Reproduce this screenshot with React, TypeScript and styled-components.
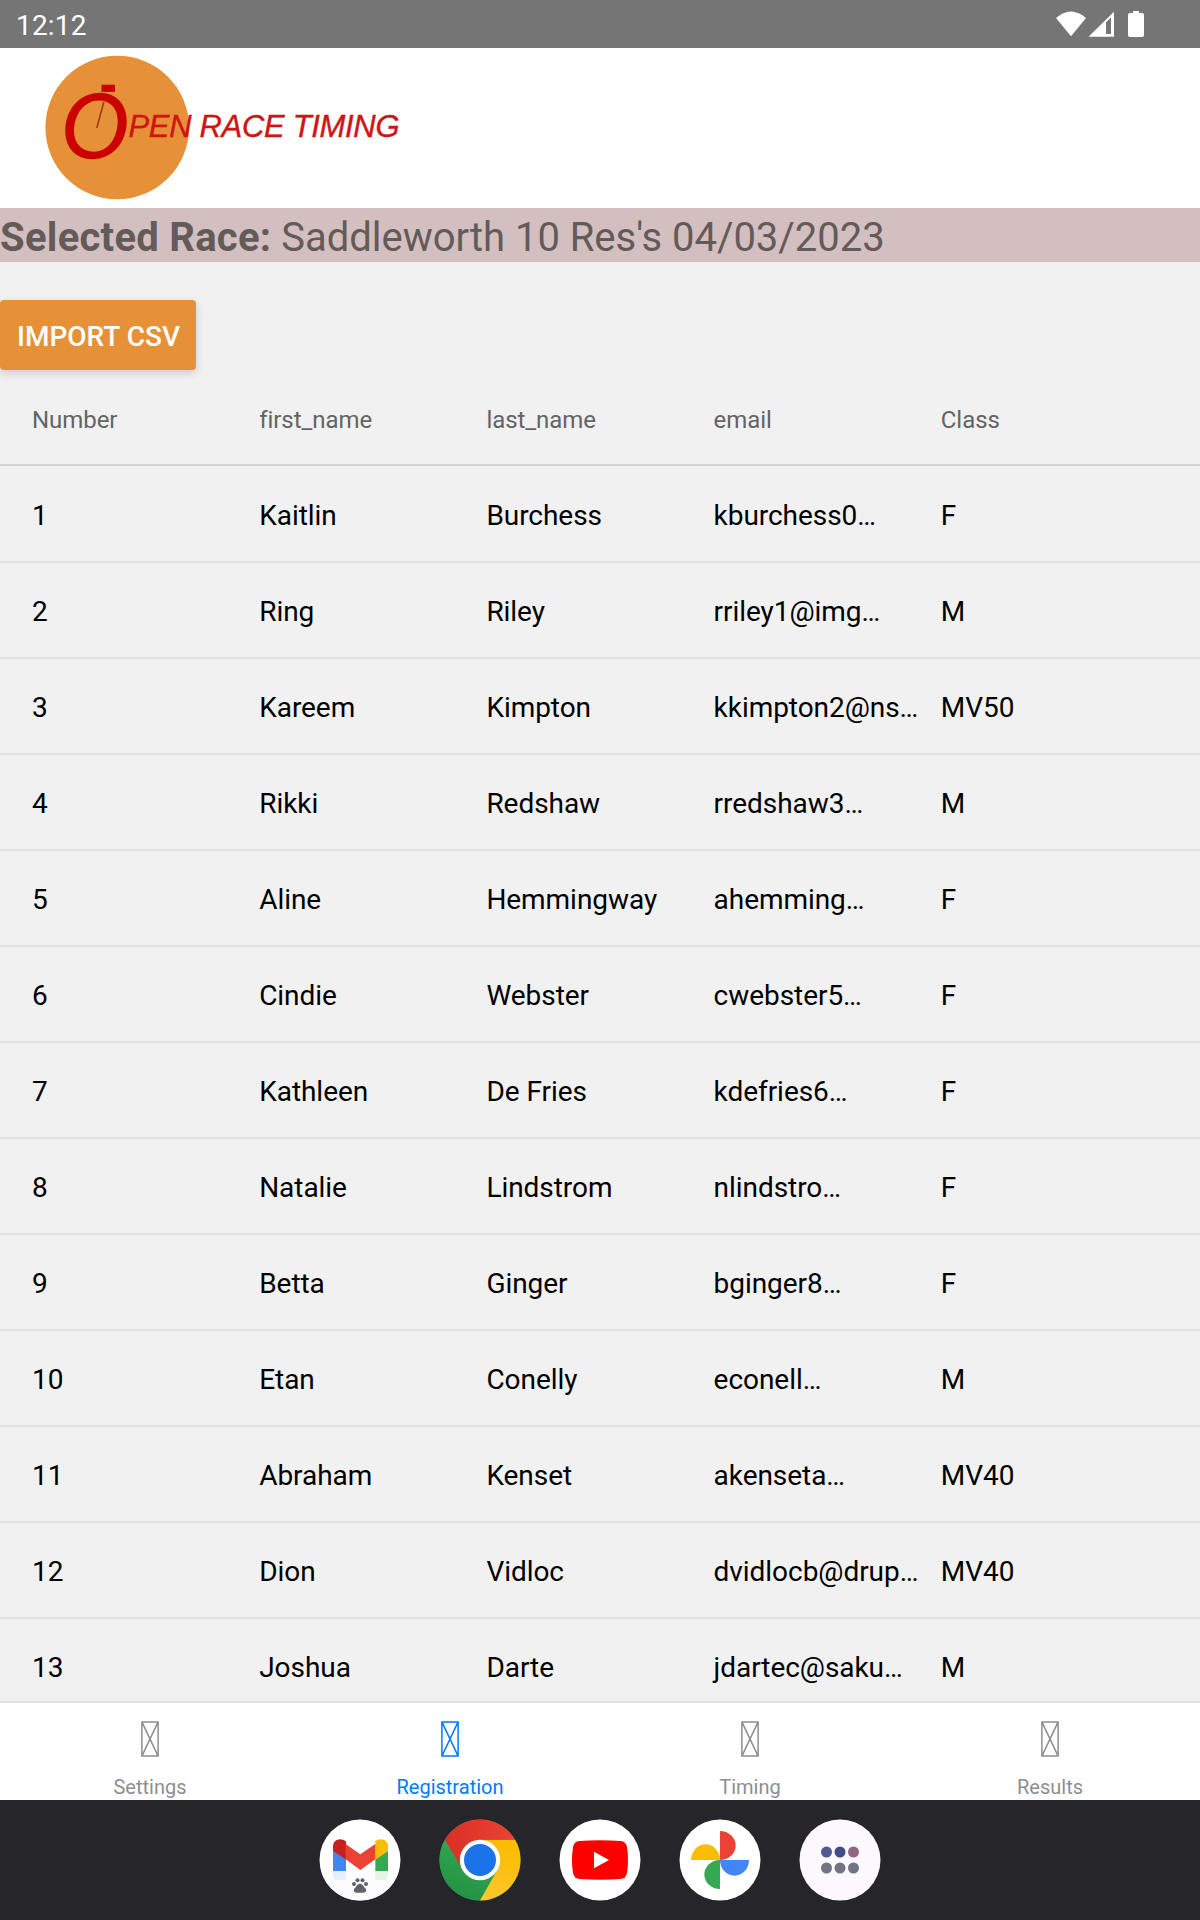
import React from "react";
import styled, { createGlobalStyle } from "styled-components";

const GlobalStyle = createGlobalStyle`
  * { box-sizing: border-box; }
  body { margin: 0; background: #f1f1f1; font-family: Roboto, "Noto Sans", sans-serif; }
`;

const Screen = styled.div`
  width: 1200px;
  height: 1920px;
  display: flex;
  flex-direction: column;
  overflow: hidden;
  background: #f1f1f1;
`;

const StatusBar = styled.header`
  flex: none;
  height: 48px;
  display: flex;
  align-items: center;
  justify-content: space-between;
  padding: 0 56px 0 16px;
  background: #757575;
  color: #fff;
`;

const Clock = styled.span`
  font-size: 28px;
  line-height: 48px;
  padding-top: 3px;
  letter-spacing: 0.2px;
`;

const StatusIcons = styled.div`
  display: flex;
  align-items: center;
  svg { display: block; }
`;

const Brand = styled.div`
  flex: none;
  height: 160px;
  background: #fff;
  svg { display: block; }
`;

const RaceBanner = styled.div`
  flex: none;
  height: 54px;
  line-height: 60px;
  font-size: 40px;
  letter-spacing: -0.03px;
  background: #d3bfbf;
  color: #635b59;
  white-space: pre;
  b { letter-spacing: 0.27px; }
`;

const Main = styled.main`
  flex: 1;
  min-height: 0;
  overflow: hidden;
  padding-top: 38px;
`;

const ImportButton = styled.button`
  display: block;
  width: 196px;
  height: 70px;
  padding: 3px 0 0 1px;
  border: 0;
  border-radius: 4px;
  background: #e69138;
  color: #fff;
  font: 500 28px/67px Roboto, sans-serif;
  white-space: nowrap;
  box-shadow: 0 3px 8px rgba(0, 0, 0, 0.16);
`;

const Row = styled.div<{ $head?: boolean }>`
  display: grid;
  grid-template-columns: repeat(5, 1fr);
  height: 96px;
  padding: 0 32px;
  border-bottom: 2px solid ${(p) => (p.$head ? "#d3d3d3" : "#e2e2e2")};
  font-size: ${(p) => (p.$head ? 24 : 28)}px;
  line-height: ${(p) => (p.$head ? 100 : 97)}px;
  letter-spacing: -0.05px;
  color: ${(p) => (p.$head ? "#646464" : "#000")};
  white-space: nowrap;
`;

const Body = styled.div`
  padding-top: 1px;
`;

const TabBar = styled.nav`
  flex: none;
  height: 99px;
  display: grid;
  grid-template-columns: repeat(4, 1fr);
  background: #fff;
  border-top: 2px solid #e3e3e3;
`;

const Tab = styled.div<{ $active?: boolean }>`
  display: flex;
  flex-direction: column;
  align-items: center;
  justify-content: space-between;
  padding: 18px 0 1px;
  color: ${(p) => (p.$active ? "#007aff" : "#8e8e8f")};
  svg { display: block; }
`;

const TabLabel = styled.span`
  font-size: 20px;
  line-height: 24px;
`;

const Dock = styled.footer`
  flex: none;
  height: 120px;
  display: flex;
  align-items: center;
  justify-content: center;
  gap: 38px;
  background: #26252a;
  svg { display: block; }
`;

const columns = ["Number", "first_name", "last_name", "email", "Class"];

const runners = [
  ["1", "Kaitlin", "Burchess", "kburchess0…", "F"],
  ["2", "Ring", "Riley", "rriley1@img…", "M"],
  ["3", "Kareem", "Kimpton", "kkimpton2@ns…", "MV50"],
  ["4", "Rikki", "Redshaw", "rredshaw3…", "M"],
  ["5", "Aline", "Hemmingway", "ahemming…", "F"],
  ["6", "Cindie", "Webster", "cwebster5…", "F"],
  ["7", "Kathleen", "De Fries", "kdefries6…", "F"],
  ["8", "Natalie", "Lindstrom", "nlindstro…", "F"],
  ["9", "Betta", "Ginger", "bginger8…", "F"],
  ["10", "Etan", "Conelly", "econell…", "M"],
  ["11", "Abraham", "Kenset", "akenseta…", "MV40"],
  ["12", "Dion", "Vidloc", "dvidlocb@drup…", "MV40"],
  ["13", "Joshua", "Darte", "jdartec@saku…", "M"],
];

const tabs = ["Settings", "Registration", "Timing", "Results"];

const Logo = () => (
  <svg width="420" height="160" viewBox="0 48 420 160">
    <circle cx="117.2" cy="127.5" r="71.8" fill="#e69138" />
    <rect x="101.5" y="84.7" width="13.5" height="7.2" fill="#c00" />
    <path
      d="M100 92.7C116 92.7 126.7 104 126.7 121C126.7 143 112 159.2 92.3 159.2C76 159.2 65.3 148 65.3 131C65.3 109 80 92.7 100 92.7Z
         M99 100.5C84.5 100.5 74 114 74 131.5C74 143.5 82 151.7 94 151.7C108 151.7 117.7 138 117.7 120.5C117.7 108.5 110.5 100.5 99 100.5Z"
      fill="#c00"
      fillRule="evenodd"
    />
    <path d="M103.8 102 96.8 128" stroke="#9c3a12" strokeWidth="1.6" />
    <text
      x="128.5"
      y="137"
      fill="#d01414"
      stroke="#d01414"
      strokeWidth="0.4"
      fontFamily="'Liberation Sans', Arial, sans-serif"
      fontStyle="italic"
      fontSize="31"
      textLength="271"
    >
      PEN RACE TIMING
    </text>
  </svg>
);

const MissingGlyph = () => (
  <svg width="18" height="36" viewBox="0 0 18 36" fill="none" stroke="currentColor" strokeWidth="1.5">
    <path d="M.9.9H17.1V35.1H.9ZM.9.9 17.1 35.1M17.1.9.9 35.1" />
  </svg>
);

const AppIcon = ({ bg = "#fff", children }: { bg?: string; children: React.ReactNode }) => (
  <svg width="82" height="82" viewBox="-123 -123 246 246">
    <circle r="121.5" fill={bg} />
    {children}
  </svg>
);

const Gmail = () => (
  <AppIcon>
    <path d="M-81-28-42-2V60H-70Q-81 60-81 49Z" fill="#4285f4" />
    <path d="M84-28 46-2V60H73Q84 60 84 49Z" fill="#34a853" />
    <path d="M-81-27V-40C-81-61-59-69-42-56V-1Z" fill="#c5221f" />
    <path d="M84-27V-40C84-61 62-69 46-56V-1Z" fill="#fbbc04" />
    <path d="M-43-48 1-17 46-48V-2L1 30-43-2Z" fill="#ea4335" />
    <path d="M-117 33H117A121.5 121.5 0 0 1-117 33Z" fill="#fcfcfc" fillOpacity=".89" />
    <g fill="#5f6368">
      <circle cx="-18" cy="72" r="6" />
      <circle cx="-7.5" cy="61" r="6" />
      <circle cx="7.5" cy="61" r="6" />
      <circle cx="18" cy="72" r="6" />
      <path d="M0 71C8 71 10 79 16 85C22 92 17 99 9 98H-9C-17 99-22 92-16 85C-10 79-8 71 0 71Z" />
    </g>
  </AppIcon>
);

const Chrome = () => (
  <AppIcon bg="#34a853">
    <defs>
      <linearGradient id="chromeGreen" x1="0" y1="1" x2=".4" y2="0">
        <stop offset="0" stopColor="#1e8e3e" />
        <stop offset="1" stopColor="#34a853" />
      </linearGradient>
      <linearGradient id="chromeRed" x1="0" y1="0" x2="1" y2="0">
        <stop offset="0" stopColor="#d93025" />
        <stop offset="1" stopColor="#ea4335" />
      </linearGradient>
      <linearGradient id="chromeYellow" x1="0" y1="1" x2=".4" y2="0">
        <stop offset="0" stopColor="#fcc934" />
        <stop offset="1" stopColor="#fbbc04" />
      </linearGradient>
    </defs>
    <path d="M-105.5-60.5-52 30 0 0 52 30 0 121.5A121.5 121.5 0 0 1-105.5-60.5Z" fill="url(#chromeGreen)" />
    <path d="M0 121.5 52 30 0 0V-60.5H105.5A121.5 121.5 0 0 1 0 121.5Z" fill="url(#chromeYellow)" />
    <path d="M105.5-60.5H0V0L-52 30-105.5-60.5A121.5 121.5 0 0 1 105.5-60.5Z" fill="url(#chromeRed)" />
    <circle r="60.5" fill="#fff" />
    <circle r="48" fill="#1a73e8" />
  </AppIcon>
);

const YouTube = () => (
  <AppIcon>
    <path
      d="M-62-57Q0-61 62-57Q78-55 81-39Q87 0 81 39Q78 55 62 57Q0 61-62 57Q-78 55-81 39Q-87 0-81-39Q-78-55-62-57Z"
      fill="#f00"
    />
    <path d="M-18-24.5 27 0-18 25Z" fill="#fff" />
  </AppIcon>
);

const Photos = () => (
  <AppIcon>
    <path d="M0 0V-87A47 43.5 0 0 1 0 0Z" fill="#ea4335" />
    <path d="M0 0H87A43.5 47 0 0 1 0 0Z" fill="#4285f4" />
    <path d="M0 0V87A47 43.5 0 0 1 0 0Z" fill="#34a853" />
    <path d="M0 0H-87A43.5 47 0 0 1 0 0Z" fill="#fbbc04" />
  </AppIcon>
);

const AllApps = () => (
  <AppIcon bg="#fdf8fe">
    <circle cx="-40.5" cy="-24" r="16.5" fill="#525a92" />
    <circle cx="0" cy="-24" r="16.5" fill="#434b84" />
    <circle cx="40.5" cy="-24" r="16.5" fill="#8e6680" />
    {[-40.5, 0, 40.5].map((x) => (
      <circle key={x} cx={x} cy="24" r="16.5" fill="#707487" />
    ))}
  </AppIcon>
);

export default function App() {
  return (
    <Screen>
      <GlobalStyle />
      <StatusBar>
        <Clock>12:12</Clock>
        <StatusIcons>
          <svg width="88" height="26" viewBox="0 0 88 26" fill="#fff">
            <path d="M0 7Q15-6 30 7L15 25.3Z" />
            <path d="M32.5 25.7 58 .8V25.7ZM50 11.3V23H55V6.5Z" fillRule="evenodd" />
            <path d="M77 0H83V2H86Q88 2 88 4V24Q88 26 86 26H74Q72 26 72 24V4Q72 2 74 2H77Z" />
          </svg>
        </StatusIcons>
      </StatusBar>
      <Brand>
        <Logo />
      </Brand>
      <RaceBanner>
        <b>Selected Race:</b> Saddleworth 10 Res's 04/03/2023
      </RaceBanner>
      <Main>
        <ImportButton>IMPORT CSV</ImportButton>
        <Row $head>
          {columns.map((c) => (
            <span key={c}>{c}</span>
          ))}
        </Row>
        <Body>
          {runners.map((r) => (
            <Row key={r[0]}>
              {r.map((v, i) => (
                <span key={i}>{v}</span>
              ))}
            </Row>
          ))}
        </Body>
      </Main>
      <TabBar>
        {tabs.map((t) => (
          <Tab key={t} $active={t === "Registration"}>
            <MissingGlyph />
            <TabLabel>{t}</TabLabel>
          </Tab>
        ))}
      </TabBar>
      <Dock>
        <Gmail />
        <Chrome />
        <YouTube />
        <Photos />
        <AllApps />
      </Dock>
    </Screen>
  );
}
